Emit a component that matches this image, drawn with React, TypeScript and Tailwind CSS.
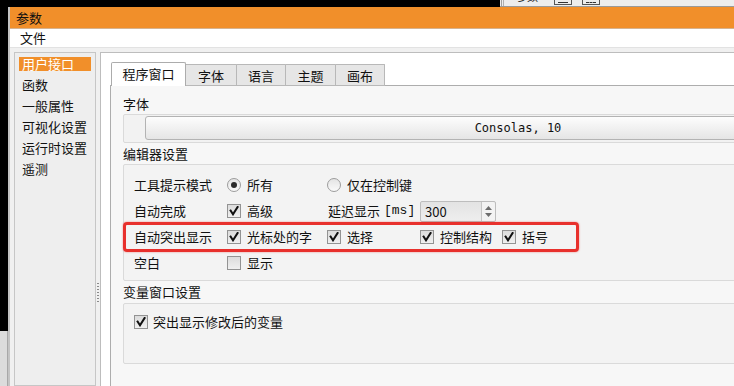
import React from "react";

function Check({ checked = true }: { checked?: boolean }) {
  return (
    <span className="w-[14px] h-[14px] shrink-0 border border-[#939393] bg-linear-to-b from-[#dcdcdc] to-[#f0f0f0] flex items-center justify-center">
      {checked && (
        <svg width="10" height="10" viewBox="0 0 10 10">
          <path d="M1.6 4.6 L4 8.3 L8.6 1" fill="none" stroke="#111" strokeWidth="2" strokeLinecap="square" />
        </svg>
      )}
    </span>
  );
}

function Radio({ checked = false }: { checked?: boolean }) {
  return (
    <span className="w-[14px] h-[14px] shrink-0 rounded-full border border-[#9c9c9c] bg-linear-to-b from-[#e4e4e4] to-[#fafafa] flex items-center justify-center">
      {checked && <span className="w-[6px] h-[6px] rounded-full bg-[#2b2b2b]" />}
    </span>
  );
}

function Opt({ children, kind = "check", checked = true, w }: { children: React.ReactNode; kind?: "check" | "radio"; checked?: boolean; w: string }) {
  return (
    <div className={`flex items-center gap-[6px] shrink-0 ${w}`}>
      {kind === "check" ? <Check checked={checked} /> : <Radio checked={checked} />}
      <span className="whitespace-nowrap">{children}</span>
    </div>
  );
}

export default function App() {
  const sideItems = ["用户接口", "函数", "一般属性", "可视化设置", "运行时设置", "遥测"];
  const tabs = [
    { t: "程序窗口", w: "w-[75px]" },
    { t: "字体", w: "w-[51px]" },
    { t: "语言", w: "w-[49px]" },
    { t: "主题", w: "w-[50px]" },
    { t: "画布", w: "w-[49px]" },
  ];
  return (
    <div className="w-[734px] h-[386px] overflow-hidden bg-black flex flex-col text-[13px] text-[#111] font-['Noto_Sans_CJK_SC','Noto_Sans',sans-serif]">
      {/* top strip */}
      <div className="h-[7px] flex shrink-0 overflow-hidden">
        <div className="w-[500px] bg-black" />
        <div className="flex-1 bg-[#ededed] border-b border-[#9a9a9a] flex items-start overflow-hidden">
          <div className="w-[2px] h-full border-l border-[#a0a0a0] ml-[1px]" />
          <div className="w-[5px] h-full border-l border-[#b0b0b0]" />
          <div className="-mt-[10px] ml-[8px] text-[11px] leading-[13px] text-[#222] w-[36px]">参数</div>
          <div className="ml-[2px] w-[18px] h-[5px] border border-t-0 border-[#555] flex items-end justify-center">
            <div className="w-[10px] h-px bg-[#333] mb-[1px]" />
          </div>
          <div className="ml-[10px] w-[18px] h-[5px] border border-t-0 border-[#555] flex items-end justify-center">
            <div className="w-[10px] h-px border-t border-dashed border-[#333] mb-[1px]" />
          </div>
        </div>
      </div>

      <div className="flex-1 flex min-h-0">
        {/* left strip */}
        <div className="w-[8px] flex flex-col shrink-0">
          <div className="h-[324px] bg-black" />
          <div className="flex-1 bg-[#dcdcdc] border-r border-[#a8a8a8]" />
        </div>

        {/* window */}
        <div className="flex-1 min-w-0 flex flex-col bg-[#f0f0f0] border-l-2 border-[#c4c4c4] overflow-hidden">
          <div className="h-[22px] shrink-0 bg-[#f18f2a] border-b border-[#d6b28e] pl-[6px] leading-[21px]">参数</div>
          <div className="h-[18px] shrink-0 bg-white pl-[10px] leading-[18px]">文件</div>
          <div className="h-px shrink-0 bg-[#e2e2e2]" />
          <div className="flex-1 min-h-0 flex pt-[4px] pl-[4px]">
            {/* sidebar */}
            <div className="w-[82px] shrink-0 border border-[#c6c6c6] bg-[#eeeeee] pt-[4px] px-[4px]">
              {sideItems.map((s, i) => (
                <div key={s} className="h-[21px]">
                  <div className={`h-[14px] leading-[14px] pl-[3px] whitespace-nowrap ${i === 0 ? "bg-[#f18f2a] text-white" : ""}`}>{s}</div>
                </div>
              ))}
            </div>
            {/* splitter */}
            <div className="w-[4px] shrink-0 pt-[231px] flex justify-center">
              <div className="w-[2px] h-[19px] bg-[repeating-linear-gradient(to_bottom,#8a8a8a_0px,#8a8a8a_1px,transparent_1px,transparent_3px)]" />
            </div>
            {/* main */}
            <div className="flex-1 min-w-0 bg-white border-l border-t border-[#bdbdbd] pl-[9px] pt-[9px] flex flex-col overflow-hidden">
              <div className="flex items-end h-[24px] pl-px relative z-10 -mb-px shrink-0">
                {tabs.map((t, i) =>
                  i === 0 ? (
                    <div key={t.t} className={`${t.w} h-[24px] bg-white border border-b-0 border-[#acacac] rounded-t-[2px] text-center leading-[22px]`}>{t.t}</div>
                  ) : (
                    <div key={t.t} className={`${t.w} h-[22px] bg-[#e6e6e6] border border-l-0 border-[#b8b8b8] rounded-tr-[1px] text-center leading-[21px]`}>{t.t}</div>
                  )
                )}
              </div>
              <div className="flex-1 w-[900px] bg-[#f7f7f7] border-t border-l border-[#adadad] pl-[12px] pt-[7px]">
                <div className="h-[21px] leading-[21px]">字体</div>
                <div className="w-[800px] h-[29px] border border-[#dadada] bg-[#f2f2f2] rounded-[2px] pl-[21px] pt-px">
                  <div className="w-[746px] h-[24px] border border-[#b3b3b3] rounded-[3px] bg-linear-to-b from-[#fdfdfd] to-[#e5e5e5] text-center leading-[22px] font-['DejaVu_Sans_Mono',monospace] text-[12px]">
                    Consolas, 10
                  </div>
                </div>
                <div className="h-[21px] leading-[21px]">编辑器设置</div>
                <div className="relative w-[800px] border border-[#dadada] bg-[#f3f3f3] rounded-[2px] pl-[10px] pt-[7px] pb-[4px]">
                  <div className="h-[26px] flex items-center">
                    <div className="w-[93px] shrink-0">工具提示模式</div>
                    <Opt kind="radio" checked w="w-[100px]">所有</Opt>
                    <Opt kind="radio" checked={false} w="w-[200px]">仅在控制键</Opt>
                  </div>
                  <div className="h-[26px] flex items-center">
                    <div className="w-[93px] shrink-0">自动完成</div>
                    <Opt w="w-[100px]">高级</Opt>
                    <div className="w-[93px] shrink-0 pl-px whitespace-nowrap flex items-center">
                      <span>延迟显示</span>
                      <span className="ml-[4px] font-['Liberation_Mono',monospace] text-[13px]">[ms]</span>
                    </div>
                    <div className="w-[76px] h-[21px] flex border border-[#bdbdbd] rounded-[2px] bg-linear-to-b from-[#e3e3e3] to-[#eeeeee]">
                      <div className="flex-1 pl-[4px] leading-[19px]">300</div>
                      <div className="w-[14px] border-l border-[#c6c6c6] bg-[#f3f3f3] flex flex-col items-center justify-center gap-[3px] rounded-r-[2px]">
                        <svg width="7" height="4" viewBox="0 0 7 4"><path d="M0 4 L3.5 0 L7 4 Z" fill="#6d6d6d" /></svg>
                        <svg width="7" height="4" viewBox="0 0 7 4"><path d="M0 0 L3.5 4 L7 0 Z" fill="#6d6d6d" /></svg>
                      </div>
                    </div>
                  </div>
                  <div className="h-[26px] flex items-center">
                    <div className="w-[93px] shrink-0">自动突出显示</div>
                    <Opt w="w-[100px]">光标处的字</Opt>
                    <Opt w="w-[93px]">选择</Opt>
                    <Opt w="w-[82px]">控制结构</Opt>
                    <Opt w="w-[60px]">括号</Opt>
                  </div>
                  <div className="h-[26px] flex items-center">
                    <div className="w-[93px] shrink-0">空白</div>
                    <Opt checked={false} w="w-[100px]">显示</Opt>
                  </div>
                  <div className="absolute left-[-1px] top-[57px] w-[456px] h-[30px] border-[3px] border-[#e8302c] rounded-[4px] shadow-[0_0_2px_rgba(232,48,44,0.6)]" />
                </div>
                <div className="h-[22px] leading-[22px]">变量窗口设置</div>
                <div className="w-[800px] h-[61px] border border-[#dadada] bg-[#f3f3f3] rounded-[2px] pl-[10px] pt-[5px]">
                  <div className="h-[26px] flex items-center gap-[5px]">
                    <Check />
                    <span>突出显示修改后的变量</span>
                  </div>
                </div>
              </div>
            </div>
          </div>
        </div>
      </div>
    </div>
  );
}
